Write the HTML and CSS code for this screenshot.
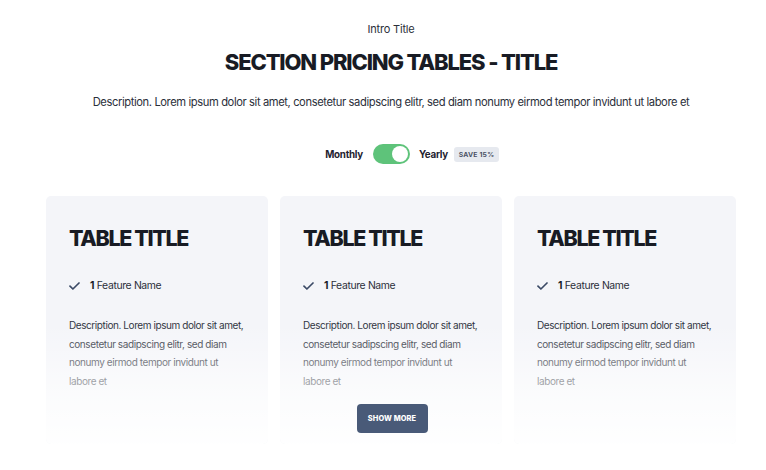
FILE: index.html
```html
<!DOCTYPE html>
<html>
<head>
<meta charset="utf-8">
<link rel="stylesheet" href="styles.css">
</head>
<body>
<section class="pricing">
  <p class="intro">Intro Title</p>
  <h1 class="heading">SECTION PRICING TABLES - TITLE</h1>
  <p class="lead">Description. Lorem ipsum dolor sit amet, consetetur sadipscing elitr, sed diam nonumy eirmod tempor invidunt ut labore et</p>
  <div class="switcher">
    <div class="sw-left"><span class="sw-label">Monthly</span></div>
    <span class="toggle"><span class="knob"></span></span>
    <div class="sw-right"><span class="sw-label">Yearly</span><span class="badge">SAVE 15%</span></div>
  </div>
  <div class="cards">
    <div class="card">
      <h2 class="card-title">TABLE TITLE</h2>
      <div class="feature">
        <svg class="check" viewBox="0 0 11 8" width="11" height="8"><path d="M1 4.2 L3.9 7 L10 1" fill="none" stroke="#3b4a66" stroke-width="1.7" stroke-linecap="round" stroke-linejoin="round"/></svg>
        <span><b>1</b> Feature Name</span>
      </div>
      <p class="card-desc">Description. Lorem ipsum dolor sit amet, consetetur sadipscing elitr, sed diam nonumy eirmod tempor invidunt ut labore et</p>
      <div class="fade"></div>
    </div>
    <div class="card">
      <h2 class="card-title">TABLE TITLE</h2>
      <div class="feature">
        <svg class="check" viewBox="0 0 11 8" width="11" height="8"><path d="M1 4.2 L3.9 7 L10 1" fill="none" stroke="#3b4a66" stroke-width="1.7" stroke-linecap="round" stroke-linejoin="round"/></svg>
        <span><b>1</b> Feature Name</span>
      </div>
      <p class="card-desc">Description. Lorem ipsum dolor sit amet, consetetur sadipscing elitr, sed diam nonumy eirmod tempor invidunt ut labore et</p>
      <div class="fade"></div>
      <button class="more">SHOW MORE</button>
    </div>
    <div class="card">
      <h2 class="card-title">TABLE TITLE</h2>
      <div class="feature">
        <svg class="check" viewBox="0 0 11 8" width="11" height="8"><path d="M1 4.2 L3.9 7 L10 1" fill="none" stroke="#3b4a66" stroke-width="1.7" stroke-linecap="round" stroke-linejoin="round"/></svg>
        <span><b>1</b> Feature Name</span>
      </div>
      <p class="card-desc">Description. Lorem ipsum dolor sit amet, consetetur sadipscing elitr, sed diam nonumy eirmod tempor invidunt ut labore et</p>
      <div class="fade"></div>
    </div>
  </div>
</section>
</body>
</html>
```
FILE: styles.css
```css
* { box-sizing: border-box; }
html, body { margin: 0; padding: 0; background: #fff; }
body {
  font-family: Inter, "Noto Sans", sans-serif;
  color: #1a1d26;
  width: 766px;
  height: 470px;
  overflow: hidden;
}
.pricing {
  display: flex;
  flex-direction: column;
  align-items: center;
  padding: 21px 0 0 16px;
}
.intro {
  margin: 0;
  font-size: 11px;
  line-height: 16px;
  letter-spacing: -0.2px;
  color: #2b2f3a;
}
.heading {
  margin: 11px 0 0;
  font-size: 22px;
  line-height: 28px;
  font-weight: 800;
  letter-spacing: -1.15px;
  color: #181b24;
}
.lead {
  margin: 18px 0 0;
  font-size: 11.2px;
  line-height: 16px;
  letter-spacing: -0.4px;
  color: #2b2f3a;
}
.switcher {
  display: grid;
  grid-template-columns: 1fr auto 1fr;
  align-items: center;
  width: 100%;
  margin-top: 33px;
  height: 22px;
}
.sw-left { display: flex; justify-content: flex-end; }
.sw-right { display: flex; align-items: center; }
.sw-label {
  font-size: 9.8px;
  font-weight: 700;
  letter-spacing: -0.25px;
  color: #1f2330;
}
.toggle {
  width: 37px;
  height: 20px;
  border-radius: 10px;
  background: #5ec37a;
  margin: 0 9px 0 10px;
  display: flex;
  align-items: center;
  justify-content: flex-end;
  padding: 2px;
}
.knob {
  width: 16px;
  height: 16px;
  border-radius: 50%;
  background: #fff;
}
.badge {
  margin-left: 6px;
  width: 45px;
  height: 15px;
  display: flex;
  align-items: center;
  justify-content: center;
  background: #e6e9ef;
  color: #4a5265;
  font-size: 6.8px;
  font-weight: 700;
  letter-spacing: 0.2px;
  border-radius: 3px;
}
.cards {
  display: grid;
  grid-template-columns: repeat(3, 222px);
  gap: 12px;
  margin-top: 31px;
}
.card {
  position: relative;
  height: 248px;
  background: #f4f5f9;
  border-radius: 5px;
  padding: 28px 21px 0 23px;
  overflow: hidden;
  display: flex;
  flex-direction: column;
  align-items: flex-start;
}
.card-title {
  margin: 0;
  font-size: 21.5px;
  line-height: 28px;
  font-weight: 800;
  letter-spacing: -1.35px;
  color: #181b24;
}
.feature {
  display: flex;
  align-items: center;
  margin-top: 26px;
  font-size: 10.4px;
  line-height: 16px;
  letter-spacing: -0.35px;
  color: #2b2f3a;
}
.feature b { font-weight: 700; color: #1a1d26; }
.check { margin-right: 10px; }
.card-desc {
  margin: 22px 0 0;
  font-size: 10px;
  line-height: 18.5px;
  letter-spacing: -0.42px;
  color: #30343f;
}
.fade {
  position: absolute;
  left: 0; right: 0; bottom: 0;
  height: 120px;
  background: linear-gradient(to bottom, rgba(255,255,255,0) 0%, rgba(255,255,255,0.45) 40%, rgba(255,255,255,0.7) 65%, rgba(255,255,255,0.96) 100%);
  pointer-events: none;
}
.more {
  position: relative;
  z-index: 1;
  align-self: center;
  margin-top: 14px;
  width: 71px;
  height: 29px;
  border: 0;
  border-radius: 4px;
  background: #495a78;
  color: #fff;
  font-family: Inter, sans-serif;
  font-size: 7.4px;
  font-weight: 800;
  letter-spacing: 0.1px;
  padding: 0;
}
```
